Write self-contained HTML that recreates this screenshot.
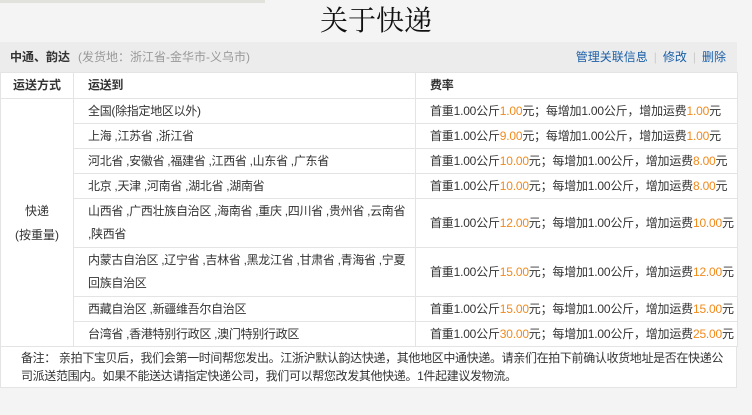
<!DOCTYPE html>
<html><head><meta charset="utf-8"><style>
*{margin:0;padding:0;box-sizing:border-box}
body{width:752px;height:415px;background:#f4f4f4;font-family:"Liberation Sans","Noto Sans CJK SC",sans-serif;font-size:12px;color:#333;position:relative;overflow:hidden}
.top{position:absolute;left:0;top:0;width:265px;height:3px;background:#e2e2dc}
h1{position:absolute;left:0;width:752px;top:4px;text-align:center;font-family:"Liberation Serif","Noto Serif CJK SC",serif;font-weight:normal;font-size:28px;color:#111;line-height:36px}
.bar{position:absolute;left:0;top:42px;width:737px;height:30px;background:#ececec;line-height:30px;padding-left:10px;white-space:nowrap}
.bar b{color:#333}
.bar .g{color:#999;margin-left:8px}
.bar .r{position:absolute;right:11px;top:0;color:#1b5fa8}
.bar .r i{color:#ccc;font-style:normal;margin:0 6px}
table{position:absolute;left:0;top:72px;width:737px;border-collapse:collapse;background:#fff;table-layout:fixed}
td{border:1px solid #e4e4e4;padding:0 0 0 14px;height:25px;line-height:23px;vertical-align:middle;white-space:nowrap;overflow:hidden;letter-spacing:-0.3px}
td.c1{width:73px;text-align:center;padding:0;letter-spacing:0}
td.c2{width:342px}
td.c3{width:322px;letter-spacing:-0.2px}
td.two{line-height:23px;height:49px}
tr.h td{height:26px;font-weight:bold}
.o{color:#f08a1c}
.note{position:absolute;left:0;top:346px;width:737px;height:42px;background:#fff;border:1px solid #e4e4e4;padding:2px 0 0 20px;line-height:18px;color:#333;white-space:nowrap;letter-spacing:-0.35px;font-size:12px}
</style></head><body>
<div class="top"></div>
<h1>关于快递</h1>
<div class="bar"><b>中通、韵达</b><span class="g">(发货地：浙江省-金华市-义乌市)</span><span class="r">管理关联信息<i>|</i>修改<i>|</i>删除</span></div>
<table>
<tr class="h"><td class="c1">运送方式</td><td class="c2">运送到</td><td class="c3">费率</td></tr>
<tr><td class="c1" rowspan="8" style="line-height:24px">快递<br>(按重量)</td><td class="c2">全国(除指定地区以外)</td><td class="c3">首重1.00公斤<span class="o">1.00</span>元；每增加1.00公斤，增加运费<span class="o">1.00</span>元</td></tr>
<tr><td class="c2">上海 ,江苏省 ,浙江省</td><td class="c3">首重1.00公斤<span class="o">9.00</span>元；每增加1.00公斤，增加运费<span class="o">1.00</span>元</td></tr>
<tr><td class="c2">河北省 ,安徽省 ,福建省 ,江西省 ,山东省 ,广东省</td><td class="c3">首重1.00公斤<span class="o">10.00</span>元；每增加1.00公斤，增加运费<span class="o">8.00</span>元</td></tr>
<tr><td class="c2">北京 ,天津 ,河南省 ,湖北省 ,湖南省</td><td class="c3">首重1.00公斤<span class="o">10.00</span>元；每增加1.00公斤，增加运费<span class="o">8.00</span>元</td></tr>
<tr><td class="c2 two">山西省 ,广西壮族自治区 ,海南省 ,重庆 ,四川省 ,贵州省 ,云南省<br>,陕西省</td><td class="c3">首重1.00公斤<span class="o">12.00</span>元；每增加1.00公斤，增加运费<span class="o">10.00</span>元</td></tr>
<tr><td class="c2 two">内蒙古自治区 ,辽宁省 ,吉林省 ,黑龙江省 ,甘肃省 ,青海省 ,宁夏<br>回族自治区</td><td class="c3">首重1.00公斤<span class="o">15.00</span>元；每增加1.00公斤，增加运费<span class="o">12.00</span>元</td></tr>
<tr><td class="c2">西藏自治区 ,新疆维吾尔自治区</td><td class="c3">首重1.00公斤<span class="o">15.00</span>元；每增加1.00公斤，增加运费<span class="o">15.00</span>元</td></tr>
<tr><td class="c2">台湾省 ,香港特别行政区 ,澳门特别行政区</td><td class="c3">首重1.00公斤<span class="o">30.00</span>元；每增加1.00公斤，增加运费<span class="o">25.00</span>元</td></tr>
</table>
<div class="note">备注： 亲拍下宝贝后，我们会第一时间帮您发出。江浙沪默认韵达快递，其他地区中通快递。请亲们在拍下前确认收货地址是否在快递公<br>司派送范围内。如果不能送达请指定快递公司，我们可以帮您改发其他快递。1件起建议发物流。</div>
</body></html>
